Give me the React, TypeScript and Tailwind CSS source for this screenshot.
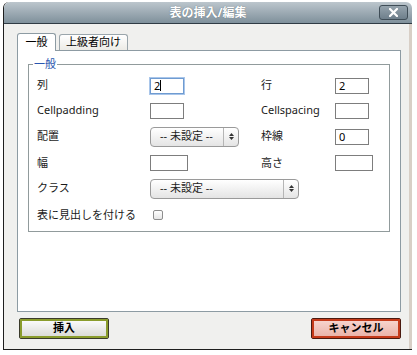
import React from "react";

const font = "font-['Noto_Sans','Noto_Sans_CJK_JP',sans-serif]";

const TextBox = ({ value = "", w = "w-[34px]", focus = false }: { value?: string; w?: string; focus?: boolean }) => (
  <div
    className={`${w} h-[16px] bg-white flex items-center pl-[3px] text-[11px] leading-none text-black ${
      focus ? "border border-[#6f9bd1] shadow-[0_0_0_1px_#a9c6ea]" : "border border-[#7d7d7d]"
    }`}
  >
    {value}
    {focus && <span className="w-px h-[11px] bg-black" />}
  </div>
);

const Select = ({ w }: { w: string }) => (
  <div
    className={`${w} h-[20px] flex items-center rounded-[4px] border border-[#9a9a9a] bg-gradient-to-b from-white to-[#e4e4e4] text-[11px] text-[#222]`}
  >
    <span className="flex-1 pl-[9px] whitespace-nowrap">-- 未設定 --</span>
    <span className="w-[15px] h-full border-l border-[#b5b5b5] flex flex-col items-center justify-center gap-[1px]">
      <svg width="5" height="3" viewBox="0 0 5 3"><path d="M0 3 L2.5 0 L5 3 Z" fill="#333" /></svg>
      <svg width="5" height="3" viewBox="0 0 5 3"><path d="M0 0 L2.5 3 L5 0 Z" fill="#333" /></svg>
    </span>
  </div>
);

const Row = ({ h, children }: { h: string; children: React.ReactNode }) => (
  <div className={`${h} flex items-center pl-[8px]`}>{children}</div>
);

const Label = ({ w, children }: { w: string; children: React.ReactNode }) => (
  <span className={`${w} text-[11px] text-[#1a1a1a] whitespace-nowrap`}>{children}</span>
);

const App = () => {
  return (
    <div className={`w-[417px] h-[355px] bg-white pt-[2px] pl-[3px] overflow-hidden ${font}`}>
      <div className="w-[409px] h-[348px] flex flex-col border-l border-b border-[#1e1e1e] rounded-t-[6px]">
        {/* title bar */}
        <div className="h-[22px] shrink-0 flex items-center rounded-t-[6px] bg-gradient-to-b from-[#bcc6cd] to-[#7f909b] border-b border-[#2f3b44] pr-[4px]">
          <span className="flex-1 text-center pl-[33px] text-white font-bold text-[12px] [text-shadow:0_0_1px_#55636d]">
            表の挿入/編集
          </span>
          <button className="w-[29px] h-[15px] rounded-[3px] border border-[#3f4d57] bg-gradient-to-b from-[#95a3ad] to-[#6e7f8b] flex items-center justify-center">
            <svg width="9" height="9" viewBox="0 0 9 9">
              <path d="M1 1 L8 8 M8 1 L1 8" stroke="white" strokeWidth="2.2" strokeLinecap="square" />
            </svg>
          </button>
        </div>

        {/* body */}
        <div className="flex-1 flex flex-col bg-[#f0f0ee] border-r-[3px] border-[#d8cfc6] pl-[13px] pt-[9px]">
          <div className="flex items-end h-[17px] relative z-10">
            <div className="w-[39px] h-[18px] -mb-px bg-white border border-b-0 border-[#8d9ba3] rounded-t-[3px] flex items-center justify-center text-[11px] text-black">
              一般
            </div>
            <div className="ml-[3px] w-[69px] h-[16px] bg-gradient-to-b from-white to-[#ecebe6] border border-b-0 border-[#9aa5ab] rounded-t-[3px] flex items-center justify-center text-[11px] text-black">
              上級者向け
            </div>
          </div>

          <div className="w-[384px] h-[262px] bg-white border border-[#8d9ba3] pl-[10px] pt-[6px]">
            <fieldset className="w-[362px] h-[175px] border border-[#919b9c]">
              <legend className="ml-[4px] px-[1px] text-[11px] leading-[14px] text-[#2a57b0]">一般</legend>
              <div className="pt-[2px]">
                <Row h="h-[25px]">
                  <Label w="w-[113px]">列</Label>
                  <div className="w-[111px]"><TextBox value="2" focus /></div>
                  <Label w="w-[74px]">行</Label>
                  <TextBox value="2" />
                </Row>
                <Row h="h-[25px]">
                  <Label w="w-[113px]">Cellpadding</Label>
                  <div className="w-[111px]"><TextBox /></div>
                  <Label w="w-[74px]">Cellspacing</Label>
                  <TextBox />
                </Row>
                <Row h="h-[27px]">
                  <Label w="w-[113px]">配置</Label>
                  <div className="w-[111px]"><Select w="w-[89px]" /></div>
                  <Label w="w-[74px]">枠線</Label>
                  <TextBox value="0" />
                </Row>
                <Row h="h-[26px]">
                  <Label w="w-[113px]">幅</Label>
                  <div className="w-[111px]"><TextBox w="w-[38px]" /></div>
                  <Label w="w-[74px]">高さ</Label>
                  <TextBox w="w-[38px]" />
                </Row>
                <Row h="h-[25px]">
                  <Label w="w-[113px]">クラス</Label>
                  <Select w="w-[149px]" />
                </Row>
                <Row h="h-[28px]">
                  <Label w="w-[116px]">表に見出しを付ける</Label>
                  <span className="w-[10px] h-[10px] rounded-[2px] border border-[#8e8e8e] bg-gradient-to-b from-white to-[#e6e6e6]" />
                </Row>
              </div>
            </fieldset>
          </div>

          <div className="flex justify-between pt-[6px] pl-[2px] pr-[8px]">
            <button className="w-[90px] h-[21px] border border-[#3a3a2a] rounded-[2px] p-0">
              <span className="w-full h-full flex items-center justify-center border-2 border-[#8a9c2c] bg-gradient-to-b from-[#fafafa] to-[#dcdcd8] text-[11px] font-bold text-black">
                挿入
              </span>
            </button>
            <button className="w-[90px] h-[21px] border border-[#4a1a10] rounded-[2px] p-0">
              <span className="w-full h-full flex items-center justify-center border-2 border-[#c53a1a] bg-gradient-to-b from-[#f7d3cc] to-[#eab4aa] text-[11px] font-bold text-black">
                キャンセル
              </span>
            </button>
          </div>
        </div>
      </div>
    </div>
  );
};

export default App;
